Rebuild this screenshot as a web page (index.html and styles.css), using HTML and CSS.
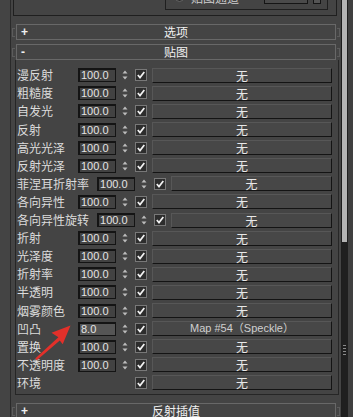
FILE: index.html
```html
<!DOCTYPE html>
<html lang="zh-CN">
<head>
    <meta charset="UTF-8">
    <meta name="viewport" content="width=device-width, initial-scale=1.0">
    <title>贴图</title>
    <link rel="stylesheet" href="styles.css">
</head>
<body>
    <div class="window">
        <div class="edge"></div>
        <div class="main">
            <!-- 上一个卷展栏的底部 -->
            <div class="prev-box">
                <div class="prev-inner">
                    <div class="prev-row">
                        <span class="radio"></span>
                        <span class="prev-label">贴图通道</span>
                        <span class="prev-spin"></span>
                        <span class="prev-btn"></span>
                    </div>
                </div>
            </div>

            <div class="rollout-head first"><span class="sign">+</span><span class="title">选项</span></div>
            <div class="rollout-head open"><span class="sign">-</span><span class="title">贴图</span></div>

            <div class="panel">
                <div class="row"><span class="label">漫反射</span><span class="num">100.0</span><svg class="spin" viewBox="0 0 8 14"><path d="M4 2.5L6.5 5.5H1.5Z M4 11.5L6.5 8.5H1.5Z"/></svg><svg class="check" viewBox="0 0 12 12"><rect x="0.5" y="0.5" width="11" height="11"/><polyline points="2.8,6 5,8.6 9.3,3"/></svg><span class="slot">无</span></div>
                <div class="row"><span class="label">粗糙度</span><span class="num">100.0</span><svg class="spin" viewBox="0 0 8 14"><path d="M4 2.5L6.5 5.5H1.5Z M4 11.5L6.5 8.5H1.5Z"/></svg><svg class="check" viewBox="0 0 12 12"><rect x="0.5" y="0.5" width="11" height="11"/><polyline points="2.8,6 5,8.6 9.3,3"/></svg><span class="slot">无</span></div>
                <div class="row"><span class="label">自发光</span><span class="num">100.0</span><svg class="spin" viewBox="0 0 8 14"><path d="M4 2.5L6.5 5.5H1.5Z M4 11.5L6.5 8.5H1.5Z"/></svg><svg class="check" viewBox="0 0 12 12"><rect x="0.5" y="0.5" width="11" height="11"/><polyline points="2.8,6 5,8.6 9.3,3"/></svg><span class="slot">无</span></div>
                <div class="row"><span class="label">反射</span><span class="num">100.0</span><svg class="spin" viewBox="0 0 8 14"><path d="M4 2.5L6.5 5.5H1.5Z M4 11.5L6.5 8.5H1.5Z"/></svg><svg class="check" viewBox="0 0 12 12"><rect x="0.5" y="0.5" width="11" height="11"/><polyline points="2.8,6 5,8.6 9.3,3"/></svg><span class="slot">无</span></div>
                <div class="row"><span class="label">高光光泽</span><span class="num">100.0</span><svg class="spin" viewBox="0 0 8 14"><path d="M4 2.5L6.5 5.5H1.5Z M4 11.5L6.5 8.5H1.5Z"/></svg><svg class="check" viewBox="0 0 12 12"><rect x="0.5" y="0.5" width="11" height="11"/><polyline points="2.8,6 5,8.6 9.3,3"/></svg><span class="slot">无</span></div>
                <div class="row"><span class="label">反射光泽</span><span class="num">100.0</span><svg class="spin" viewBox="0 0 8 14"><path d="M4 2.5L6.5 5.5H1.5Z M4 11.5L6.5 8.5H1.5Z"/></svg><svg class="check" viewBox="0 0 12 12"><rect x="0.5" y="0.5" width="11" height="11"/><polyline points="2.8,6 5,8.6 9.3,3"/></svg><span class="slot">无</span></div>
                <div class="row"><span class="label">菲涅耳折射率</span><span class="num">100.0</span><svg class="spin" viewBox="0 0 8 14"><path d="M4 2.5L6.5 5.5H1.5Z M4 11.5L6.5 8.5H1.5Z"/></svg><svg class="check" viewBox="0 0 12 12"><rect x="0.5" y="0.5" width="11" height="11"/><polyline points="2.8,6 5,8.6 9.3,3"/></svg><span class="slot">无</span></div>
                <div class="row"><span class="label">各向异性</span><span class="num">100.0</span><svg class="spin" viewBox="0 0 8 14"><path d="M4 2.5L6.5 5.5H1.5Z M4 11.5L6.5 8.5H1.5Z"/></svg><svg class="check" viewBox="0 0 12 12"><rect x="0.5" y="0.5" width="11" height="11"/><polyline points="2.8,6 5,8.6 9.3,3"/></svg><span class="slot">无</span></div>
                <div class="row"><span class="label">各向异性旋转</span><span class="num">100.0</span><svg class="spin" viewBox="0 0 8 14"><path d="M4 2.5L6.5 5.5H1.5Z M4 11.5L6.5 8.5H1.5Z"/></svg><svg class="check" viewBox="0 0 12 12"><rect x="0.5" y="0.5" width="11" height="11"/><polyline points="2.8,6 5,8.6 9.3,3"/></svg><span class="slot">无</span></div>
                <div class="row"><span class="label">折射</span><span class="num">100.0</span><svg class="spin" viewBox="0 0 8 14"><path d="M4 2.5L6.5 5.5H1.5Z M4 11.5L6.5 8.5H1.5Z"/></svg><svg class="check" viewBox="0 0 12 12"><rect x="0.5" y="0.5" width="11" height="11"/><polyline points="2.8,6 5,8.6 9.3,3"/></svg><span class="slot">无</span></div>
                <div class="row"><span class="label">光泽度</span><span class="num">100.0</span><svg class="spin" viewBox="0 0 8 14"><path d="M4 2.5L6.5 5.5H1.5Z M4 11.5L6.5 8.5H1.5Z"/></svg><svg class="check" viewBox="0 0 12 12"><rect x="0.5" y="0.5" width="11" height="11"/><polyline points="2.8,6 5,8.6 9.3,3"/></svg><span class="slot">无</span></div>
                <div class="row"><span class="label">折射率</span><span class="num">100.0</span><svg class="spin" viewBox="0 0 8 14"><path d="M4 2.5L6.5 5.5H1.5Z M4 11.5L6.5 8.5H1.5Z"/></svg><svg class="check" viewBox="0 0 12 12"><rect x="0.5" y="0.5" width="11" height="11"/><polyline points="2.8,6 5,8.6 9.3,3"/></svg><span class="slot">无</span></div>
                <div class="row"><span class="label">半透明</span><span class="num">100.0</span><svg class="spin" viewBox="0 0 8 14"><path d="M4 2.5L6.5 5.5H1.5Z M4 11.5L6.5 8.5H1.5Z"/></svg><svg class="check" viewBox="0 0 12 12"><rect x="0.5" y="0.5" width="11" height="11"/><polyline points="2.8,6 5,8.6 9.3,3"/></svg><span class="slot">无</span></div>
                <div class="row"><span class="label">烟雾颜色</span><span class="num">100.0</span><svg class="spin" viewBox="0 0 8 14"><path d="M4 2.5L6.5 5.5H1.5Z M4 11.5L6.5 8.5H1.5Z"/></svg><svg class="check" viewBox="0 0 12 12"><rect x="0.5" y="0.5" width="11" height="11"/><polyline points="2.8,6 5,8.6 9.3,3"/></svg><span class="slot">无</span></div>
                <div class="row"><span class="label">凹凸</span><span class="num active">8.0</span><svg class="spin" viewBox="0 0 8 14"><path d="M4 2.5L6.5 5.5H1.5Z M4 11.5L6.5 8.5H1.5Z"/></svg><svg class="check" viewBox="0 0 12 12"><rect x="0.5" y="0.5" width="11" height="11"/><polyline points="2.8,6 5,8.6 9.3,3"/></svg><span class="slot map">Map #54（Speckle）</span></div>
                <div class="row"><span class="label">置换</span><span class="num">100.0</span><svg class="spin" viewBox="0 0 8 14"><path d="M4 2.5L6.5 5.5H1.5Z M4 11.5L6.5 8.5H1.5Z"/></svg><svg class="check" viewBox="0 0 12 12"><rect x="0.5" y="0.5" width="11" height="11"/><polyline points="2.8,6 5,8.6 9.3,3"/></svg><span class="slot">无</span></div>
                <div class="row"><span class="label">不透明度</span><span class="num">100.0</span><svg class="spin" viewBox="0 0 8 14"><path d="M4 2.5L6.5 5.5H1.5Z M4 11.5L6.5 8.5H1.5Z"/></svg><svg class="check" viewBox="0 0 12 12"><rect x="0.5" y="0.5" width="11" height="11"/><polyline points="2.8,6 5,8.6 9.3,3"/></svg><span class="slot">无</span></div>
                <div class="row"><span class="label">环境</span><span class="num blank"></span><span class="spin blank"></span><svg class="check" viewBox="0 0 12 12"><rect x="0.5" y="0.5" width="11" height="11"/><polyline points="2.8,6 5,8.6 9.3,3"/></svg><span class="slot">无</span></div>
            </div>

            <div class="rollout-head last"><span class="sign">+</span><span class="title">反射插值</span></div>
        </div>
        <div class="scrollbar">
            <div class="thumb"></div>
            <div class="grip"></div>
        </div>
        <div class="side"></div>
    </div>

    <!-- 红色标注箭头 -->
    <svg class="arrow" viewBox="0 0 353 417">
        <polygon points="35.2,358.6 58.4,337.3 51.5,332.8 70.5,325.5 62.7,344.2 59.8,340.4 36.8,360.2"/>
    </svg>
</body>
</html>
```

FILE: styles.css
```css
body {
    margin: 0;
    width: 353px;
    height: 417px;
    overflow: hidden;
    position: relative;
    background-color: #444;
    font-family: "Noto Sans CJK SC", "Liberation Sans", sans-serif;
    font-size: 12px;
    color: #dedede;
}
.window {
    display: flex;
    height: 417px;
}
.edge {
    flex: none;
    width: 10px;
    border-right: 1px solid #2a2a2a;
}
.main {
    flex: none;
    width: 330px;
}
.scrollbar {
    flex: none;
    width: 6px;
    border-left: 1px solid #1d1d1d;
    background-color: #1f1f1f;
}
.thumb {
    width: 5px;
    height: 242px;
    background-color: #b4b4b4;
}
.grip {
    width: 3px;
    height: 11px;
    margin: 103px 0 0 1px;
    background: repeating-linear-gradient(#8a8a8a 0 1px, transparent 1px 3px);
}
.side {
    flex: 1;
    background-color: #3f3f3f;
}

/* 上一个卷展栏 */
.prev-box {
    display: flow-root;
    height: 16px;
    margin: 0 4px 0 2px;
    box-sizing: border-box;
    border: 1px solid #1f1f1f;
    border-top: none;
}
.prev-inner {
    display: flow-root;
    height: 10px;
    margin: 0 8px 0 151px;
    box-sizing: border-box;
    border: 1px solid #1f1f1f;
    border-top: none;
}
.prev-row {
    display: flex;
    align-items: center;
    height: 16px;
    margin-top: -11px;
}
.radio {
    width: 7px;
    height: 7px;
    margin-left: 9px;
    border-radius: 50%;
    background-color: #2a2a2a;
    border: 1px solid #666;
}
.prev-label {
    margin-left: 7px;
    color: #cfcfcf;
}
.prev-spin {
    width: 44px;
    height: 14px;
    margin-left: 25px;
    box-sizing: border-box;
    border: 1px solid #151515;
    background-color: #4a4a4a;
}
.prev-btn {
    width: 8px;
    height: 14px;
    margin-left: 5px;
    box-sizing: border-box;
    border: 1px solid #151515;
    background-color: #555;
}

/* 卷展栏标题 */
.rollout-head {
    position: relative;
    display: flex;
    align-items: center;
    height: 16px;
    margin: 4px 5px 0 5px;
    box-sizing: border-box;
    border: 1px solid #686868;
    line-height: 14px;
}
.rollout-head.first,
.rollout-head.last {
    margin-top: 8px;
}
.rollout-head::before,
.rollout-head::after {
    content: "";
    position: absolute;
    top: 3px;
    width: 2px;
    height: 7px;
    border: 1px solid #5c5c5c;
}
.rollout-head::before {
    left: -5px;
    border-right: none;
}
.rollout-head::after {
    right: -5px;
    border-left: none;
}
.sign {
    width: 14px;
    padding-left: 4px;
    font-family: "Liberation Sans", sans-serif;
    font-weight: bold;
    font-size: 12px;
    color: #f0f0f0;
}
.title {
    flex: 1;
    text-align: center;
    padding-right: 18px;
    color: #f0f0f0;
}

/* 贴图面板 */
.panel {
    margin: 0 2px 0 4px;
    padding: 6.25px 6px 2.5px 1px;
    border: 1px solid #262626;
    border-top: none;
}
.row {
    display: flex;
    align-items: center;
    height: 18.1px;
}
.label {
    min-width: 53px;
    margin-right: 8px;
    white-space: nowrap;
    line-height: 14px;
    color: #dcdcdc;
}
.num {
    flex: none;
    width: 38px;
    height: 14px;
    box-sizing: border-box;
    padding-left: 1px;
    border: 1px solid #141414;
    border-top-width: 2px;
    border-left-width: 2px;
    background-color: #424242;
    font-family: "Liberation Sans", sans-serif;
    font-size: 11px;
    line-height: 11px;
    color: #e4e4e4;
}
.num.active {
    background-color: #555;
}
.spin {
    flex: none;
    width: 8px;
    height: 14px;
    margin-left: 5px;
    fill: #bcbcbc;
}
.blank {
    visibility: hidden;
}
.check {
    flex: none;
    width: 12px;
    height: 12px;
    margin-left: 6px;
}
.check rect {
    fill: #2d2d2d;
    stroke: #787878;
}
.check polyline {
    fill: none;
    stroke: #f2f2f2;
    stroke-width: 1.7;
}
.slot {
    flex: 1;
    height: 15px;
    margin-left: 5px;
    box-sizing: border-box;
    border: 1px solid;
    border-color: #575757 #141414 #141414 #575757;
    background-color: #474747;
    text-align: center;
    line-height: 13px;
    color: #e8e8e8;
}
.slot.map {
    font-family: "Liberation Sans", "Noto Sans CJK SC", sans-serif;
    font-size: 11px;
    color: #cfcfcf;
}

/* 标注 */
.arrow {
    position: absolute;
    left: 0;
    top: 0;
    width: 353px;
    height: 417px;
    pointer-events: none;
    fill: #e2302a;
}
```
